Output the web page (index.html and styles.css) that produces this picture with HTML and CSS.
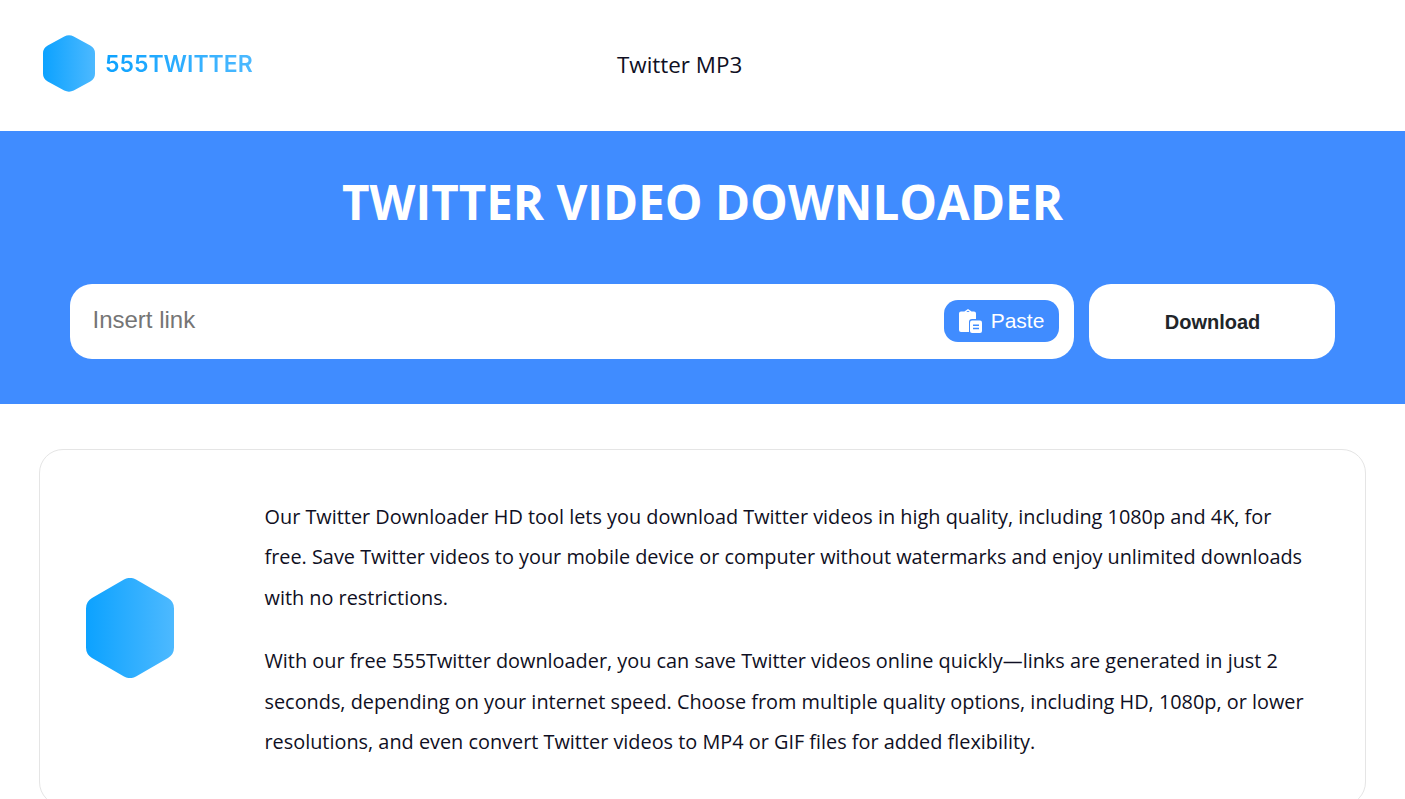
FILE: index.html
```html
<!DOCTYPE html>
<html lang="en">
<head>
    <meta charset="UTF-8">
    <meta name="viewport" content="width=device-width, initial-scale=1.0">
    <title>Twitter Video Downloader</title>
    <link rel="stylesheet" href="styles.css">
</head>
<body>
    <svg class="defs" width="0" height="0" aria-hidden="true">
        <defs>
            <linearGradient id="hexFill" x1="0" y1="0" x2="1" y2="0">
                <stop offset="0" stop-color="#0ca2ff"/>
                <stop offset="1" stop-color="#4db9ff"/>
            </linearGradient>
        </defs>
    </svg>

    <header class="header">
        <a class="logo" href="#">
            <svg class="logo-icon" viewBox="0 0 88 100" preserveAspectRatio="none">
                <path fill="url(#hexFill)" d="M36 2.500Q44-1.500 52 2.500L80 18.500Q88 23 88 32V68Q88 77 80 81.500L52 97.500Q44 101.500 36 97.500L8 81.500Q0 77 0 68V32Q0 23 8 18.500Z"/>
            </svg>
            <span class="logo-text">555TWITTER</span>
        </a>
        <nav class="nav"><a href="#">Twitter MP3</a></nav>
    </header>

    <section class="hero">
        <h1>TWITTER VIDEO DOWNLOADER</h1>
        <form class="search">
            <div class="search-box">
                <input type="text" placeholder="Insert link">
                <button type="button" class="paste">
                    <svg class="paste-icon" viewBox="0 0 24 24">
                        <path fill="#fff" d="M10 0 13.600 2.500H16a2 2 0 0 1 2 2V10h-4a3 3 0 0 0-3 3v10H3a2 2 0 0 1-2-2V4.500a2 2 0 0 1 2-2h3.400zM10 1.800 8.300 3h3.400z"/>
                        <path fill="#fff" d="M14 11.500h8a2 2 0 0 1 2 2V22a2 2 0 0 1-2 2h-8a2 2 0 0 1-2-2v-8.500a2 2 0 0 1 2-2z"/>
                        <path fill="#408cff" d="M15 15.500h6V17h-6zM15 18.800h6v1.500h-6z"/>
                    </svg>
                    Paste
                </button>
            </div>
            <button type="button" class="download">Download</button>
        </form>
    </section>

    <main class="content">
        <div class="card">
            <svg class="card-icon" viewBox="0 0 88 100">
                <path fill="url(#hexFill)" d="M38 1.600a12 12 0 0 1 12 0L82 20a12 12 0 0 1 6 10.400v39.200A12 12 0 0 1 82 80L50 98.400a12 12 0 0 1-12 0L6 80a12 12 0 0 1-6-10.400V30.400A12 12 0 0 1 6 20z"/>
            </svg>
            <div class="card-text">
                <p>Our Twitter Downloader HD tool lets you download Twitter videos in high quality, including 1080p and 4K, for free. Save Twitter videos to your mobile device or computer without watermarks and enjoy unlimited downloads with no restrictions.</p>
                <p>With our free 555Twitter downloader, you can save Twitter videos online quickly—links are generated in just 2 seconds, depending on your internet speed. Choose from multiple quality options, including HD, 1080p, or lower resolutions, and even convert Twitter videos to MP4 or GIF files for added flexibility.</p>
            </div>
        </div>
    </main>
</body>
</html>
```

FILE: styles.css
```css
body {
    margin: 0;
    font-family: "Open Sans", "Noto Sans", sans-serif;
    background-color: #ffffff;
    color: #0f0f23;
}

a {
    color: inherit;
    text-decoration: none;
}

.defs {
    display: block;
    height: 0;
}

.header {
    height: 131px;
    box-sizing: border-box;
    display: flex;
    align-items: center;
    padding: 0 0 4px 43px;
}

.logo {
    display: flex;
    align-items: center;
    gap: 10px;
    width: 574px;
}

.logo-icon {
    width: 52px;
    height: 57px;
    margin-top: -1px;
}

.logo-text {
    font-family: Inter, sans-serif;
    font-size: 23px;
    font-weight: 600;
    background: linear-gradient(90deg, #0ca2ff, #4db9ff);
    -webkit-background-clip: text;
    background-clip: text;
    color: transparent;
}

.nav {
    padding-top: 2px;
    font-size: 22.4px;
}

.hero {
    height: 273px;
    box-sizing: border-box;
    background-color: #408cff;
    padding: 38px 70px 0;
}

.hero h1 {
    margin: 0 0 49px;
    text-align: center;
    color: #ffffff;
    font-size: 47.500px;
    font-weight: 700;
    line-height: 66px;
}

.search {
    display: flex;
    gap: 15px;
}

.search-box {
    width: 1004px;
    height: 75px;
    box-sizing: border-box;
    background-color: #ffffff;
    border-radius: 22px;
    display: flex;
    align-items: center;
    padding: 0 15px 0 22.500px;
}

.search-box input {
    flex: 1;
    min-width: 0;
    border: none;
    outline: none;
    padding: 0;
    margin-top: -3px;
    font-family: "Liberation Sans", Arial, sans-serif;
    font-size: 24px;
}

.search-box input::placeholder {
    color: #757575;
}

.paste {
    width: 115px;
    height: 42px;
    margin-top: -2px;
    border: none;
    border-radius: 14px;
    background-color: #408cff;
    color: #ffffff;
    display: flex;
    align-items: center;
    justify-content: center;
    gap: 9px;
    padding: 0 1px 0 0;
    font-family: "Liberation Sans", Arial, sans-serif;
    font-size: 21px;
    cursor: pointer;
}

.paste-icon {
    width: 24px;
    height: 24px;
}

.download {
    width: 246px;
    height: 75px;
    border: none;
    border-radius: 22px;
    padding: 2px 0 0 1px;
    background-color: #ffffff;
    color: #212529;
    font-family: "Liberation Sans", Arial, sans-serif;
    font-size: 20px;
    font-weight: 700;
    cursor: pointer;
}

.content {
    padding: 45px 39px 0;
}

.card {
    box-sizing: border-box;
    border: 1px solid #e5e5e5;
    border-radius: 24px;
    padding: 47px 52px 43px 46px;
    display: flex;
    align-items: center;
}

.card-icon {
    width: 88px;
    height: 100px;
    flex-shrink: 0;
    margin: 0 90.500px 4px 0;
}

.card-text p {
    margin: 0 0 23.500px;
    font-size: 19.870px;
    line-height: 40.300px;
}

.card-text p:last-child {
    margin-bottom: 0;
}
```
